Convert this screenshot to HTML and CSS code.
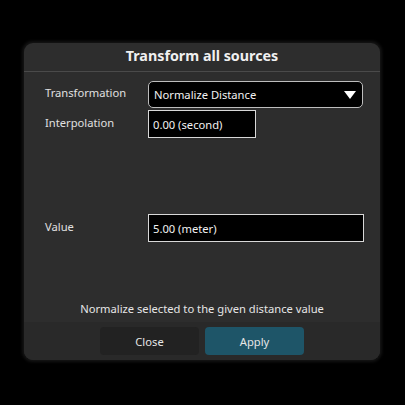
FILE: index.html
```html
<!DOCTYPE html>
<html>
<head>
<meta charset="utf-8">
<link rel="stylesheet" href="styles.css">
</head>
<body>
<div class="dialog">
  <div class="header">Transform all sources</div>
  <div class="content">
    <div class="row row-transform">
      <div class="label">Transformation</div>
      <div class="select">
        <span>Normalize Distance</span>
        <svg class="arrow" width="12" height="9" viewBox="0 0 12 9"><polygon points="0,0 12,0 6,8" fill="#fff"/></svg>
      </div>
    </div>
    <div class="row row-interp">
      <div class="label">Interpolation</div>
      <div class="input input-short">0.00 (second)</div>
    </div>
    <div class="spacer"></div>
    <div class="row row-value">
      <div class="label">Value</div>
      <div class="input input-long">5.00 (meter)</div>
    </div>
    <div class="spacer2"></div>
    <div class="desc">Normalize selected to the given distance value</div>
  </div>
  <div class="footer">
    <button class="btn btn-close">Close</button>
    <button class="btn btn-apply">Apply</button>
  </div>
</div>
</body>
</html>
```
FILE: styles.css
```css
html, body {
  margin: 0;
  padding: 0;
  background: #000;
  width: 405px;
  height: 405px;
  overflow: hidden;
  font-family: "Noto Sans", "Open Sans", sans-serif;
  color: #e6e6e6;
}
.dialog {
  position: relative;
  margin: 43px 0 0 24px;
  width: 356px;
  height: 317px;
  background: #2d2d2d;
  border-radius: 9px;
  box-shadow: 0 0 3px 2px #141414;
  display: flex;
  flex-direction: column;
  overflow: hidden;
}
.header {
  height: 28px;
  border-bottom: 1px solid #4a4a4a;
  text-align: center;
  font-weight: bold;
  font-size: 14.3px;
  line-height: 26px;
  color: #f0f0f0;
}
.content {
  flex: 1;
  display: flex;
  flex-direction: column;
  padding: 9px 16px 0 21px;
}
.row {
  display: flex;
  align-items: flex-start;
}
.label {
  width: 103px;
  font-size: 11.2px;
  line-height: 16px;
  color: #e0e0e0;
}
.row-transform .label { padding-top: 4px; }
.row-interp { margin-top: 2px; }
.row-interp .label { padding-top: 5px; }
.row-value .label { padding-top: 5px; }
.select {
  box-sizing: border-box;
  width: 215px;
  height: 27px;
  background: #000;
  border: 1px solid #bdbdbd;
  border-radius: 5px;
  display: flex;
  align-items: center;
  justify-content: space-between;
  padding: 0 6px 0 5px;
  font-size: 11.2px;
  color: #f2f2f2;
}
.arrow { display: block; margin-top: 1px; }
.input {
  box-sizing: border-box;
  height: 28px;
  background: #000;
  border: 1px solid #d8d8d8;
  display: flex;
  align-items: center;
  padding-left: 4px;
  font-size: 11.2px;
  color: #f2f2f2;
}
.input-short { width: 108px; }
.input-long { width: 216px; }
.spacer { height: 76px; }
.spacer2 { flex: 1; }
.desc {
  text-align: center;
  font-size: 11.2px;
  line-height: 16px;
  margin: 0 0 5px -5px;
  color: #e6e6e6;
}
.footer {
  height: 38px;
  background: #292929;
  display: flex;
  justify-content: center;
  align-items: flex-start;
  gap: 6px;
  padding-top: 5px;
  box-sizing: border-box;
}
.btn {
  width: 99px;
  height: 28px;
  border: none;
  border-radius: 4px;
  font-family: "Noto Sans", "Open Sans", sans-serif;
  font-size: 11.2px;
  color: #e6e6e6;
  padding: 0;
}
.btn-close { background: #222222; }
.btn-apply { background: #1e5568; }
```
